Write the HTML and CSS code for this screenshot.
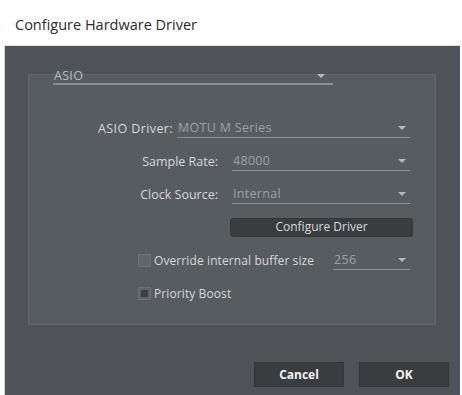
FILE: index.html
```html
<!DOCTYPE html>
<html lang="en">
<head>
    <meta charset="UTF-8">
    <title>Configure Hardware Driver</title>
    <link rel="stylesheet" href="styles.css">
</head>
<body>
    <div class="dialog">
        <div class="titlebar">Configure Hardware Driver</div>

        <div class="body">
            <div class="group">
                <div class="select select-type">
                    <span>ASIO</span><span class="arrow"></span>
                </div>

                <div class="fields">
                    <div class="row">
                        <span class="label label-near">ASIO Driver:</span>
                        <div class="select select-driver"><span>MOTU M Series</span><span class="arrow"></span></div>
                    </div>
                    <div class="row">
                        <span class="label">Sample Rate:</span>
                        <div class="select select-short"><span>48000</span><span class="arrow"></span></div>
                    </div>
                    <div class="row">
                        <span class="label">Clock Source:</span>
                        <div class="select select-short"><span>Internal</span><span class="arrow"></span></div>
                    </div>
                    <div class="row">
                        <button class="btn btn-configure">Configure Driver</button>
                    </div>
                    <div class="row row-left">
                        <span class="check"></span>
                        <span class="check-label">Override internal buffer size</span>
                        <div class="select select-buffer"><span>256</span><span class="arrow"></span></div>
                    </div>
                    <div class="row row-left">
                        <span class="check checked"></span>
                        <span class="check-label">Priority Boost</span>
                    </div>
                </div>
            </div>

            <div class="actions">
                <button class="btn btn-action">Cancel</button>
                <button class="btn btn-action">OK</button>
            </div>
        </div>
    </div>
</body>
</html>
```

FILE: styles.css
```css
body { margin: 0; background: #ffffff; font-family: "Open Sans", "Noto Sans", sans-serif; }
.dialog { width: 462px; height: 395px; display: flex; flex-direction: column; overflow: hidden; }
.titlebar { height: 45px; padding-left: 15px; font-size: 14.5px; color: #2a2a2a; line-height: 50px; box-sizing: border-box; }
.body { flex: 1; margin: 0 2px 0 4px; border-left: 1px solid #d4d4d4; border-top: 1px solid #e2e2e2; background: #4f5357; display: flex; flex-direction: column; padding-top: 28px; }

.group { margin-left: 23px; width: 406px; height: 249px; border: 1px solid #5f6468; background: #575c60; display: flex; flex-direction: column; }

.select { display: flex; align-items: center; justify-content: space-between; height: 20px; box-sizing: border-box; border-bottom: 1px solid #8c9094; color: #9ea2a6; font-size: 12.5px; letter-spacing: 0.3px; padding: 0 4px 0 1px; }
.select-type { margin: -7px 0 0 24px; width: 280px; height: 17px; border-bottom: 2px solid #8a8e92; color: #b8bcc0; padding-right: 8px; }
.select-driver { width: 233px; }
.select-short { width: 178px; }
.select-buffer { width: 77px; margin-left: auto; }
.arrow { width: 0; height: 0; border-left: 4px solid transparent; border-right: 4px solid transparent; border-top: 4px solid #b4b8bc; }

.fields { display: flex; flex-direction: column; gap: 13px; margin-top: 33px; padding-right: 25px; }
.row { display: flex; align-items: center; justify-content: flex-end; height: 20px; }
.row-left { justify-content: flex-start; padding-left: 109px; }
.label { color: #d6d8da; font-size: 12.5px; margin-right: 14px; }
.label-near { margin-right: 4px; letter-spacing: 0.4px; }

.btn { font-family: "Open Sans", "Noto Sans", sans-serif; border: 1px solid #34373a; background: #3a3d40; color: #d8dadc; cursor: pointer; }
.btn-configure { width: 183px; height: 19px; margin-right: -3px; border-radius: 3px; font-size: 12px; padding: 0; line-height: 16px; }

.check { width: 11px; height: 11px; border: 1px solid #6e7276; background: #62666a; box-sizing: content-box; }
.check.checked { background: #3c3f42; box-shadow: inset 0 0 0 2px #5e6266; }
.check-label { color: #d6d8da; font-size: 12px; margin-left: 3px; letter-spacing: 0.1px; }

.actions { display: flex; justify-content: flex-end; gap: 15px; margin-top: 37px; padding-right: 11px; }
.btn-action { width: 90px; height: 25px; font-size: 12px; font-weight: bold; color: #f2f2f2; padding: 0; }
```
